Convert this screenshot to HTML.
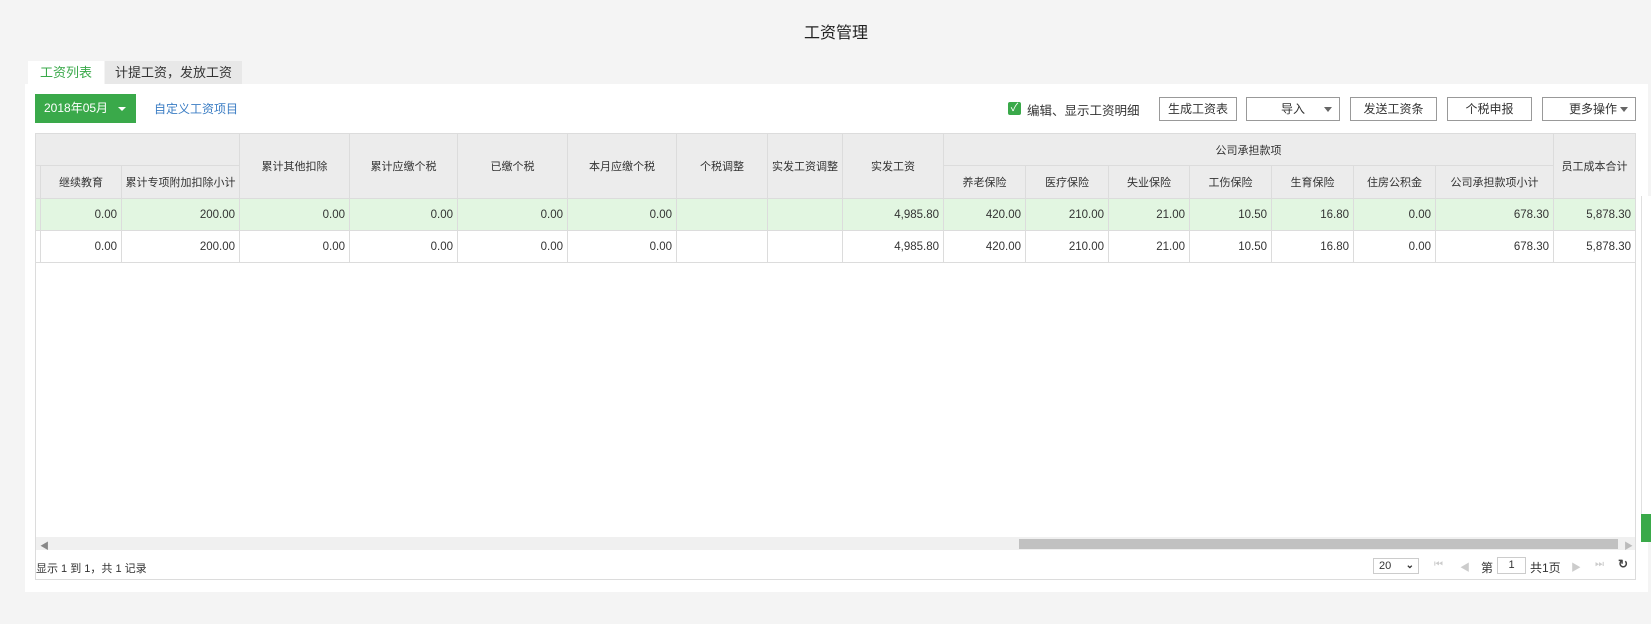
<!DOCTYPE html>
<html><head><meta charset="utf-8"><style>
*{box-sizing:border-box;margin:0;padding:0}
body{width:1651px;height:624px;background:#f4f4f4;font-family:"Liberation Sans","Noto Sans CJK SC",sans-serif;font-size:12px;color:#333;position:relative;overflow:hidden}
.a{position:absolute}
.title{left:0;width:1672px;top:19px;text-align:center;font-size:16px;color:#222}
.tab1{left:28px;top:61px;width:76px;height:23px;background:#fff;color:#3aa94a;font-size:13px;text-align:center;line-height:23px}
.tab2{left:105px;top:61px;width:137px;height:23px;background:#e8e8e8;color:#333;font-size:13px;text-align:center;line-height:23px}
.panel{left:25px;top:84px;width:1623px;height:508px;background:#fff}
.month{left:35px;top:94px;width:101px;height:29px;background:#3aa94a;color:#fff;font-size:12px;line-height:29px;padding-left:9px}
.month:after{content:"";position:absolute;right:10px;top:13px;border:4px solid transparent;border-top:4px solid #fff}
.link{left:154px;top:100px;color:#3b7dc4;font-size:12px}
.btn{top:97px;height:24px;border:1px solid #999;background:#fff;font-size:12px;text-align:center;line-height:22px;color:#333}
.dd:after{content:"";position:absolute;right:7px;top:9px;border:4px solid transparent;border-top:5px solid #666}
table{position:absolute;left:35px;top:133px;border-collapse:collapse;table-layout:fixed}
td,th{border:1px solid #dcdcdc;font-weight:normal;font-size:11px;white-space:nowrap;overflow:hidden}
th{background:#ececec;color:#333;text-align:center}
td{text-align:right;padding-right:4px;height:32px;font-size:11.5px;color:#333}
tr.g td{background:#e2f6e1}
tr.w td{background:#fff}
</style></head><body>
<div class="a title">工资管理</div>
<div class="a tab1">工资列表</div>
<div class="a tab2">计提工资，发放工资</div>
<div class="a panel"></div>
<div class="a month">2018年05月</div>
<div class="a link">自定义工资项目</div>
<div class="a" style="left:1008px;top:102px;width:13px;height:13px;background:#3aa94a;border-radius:2px;color:#fff;font-size:11px;line-height:13px;text-align:center">✓</div>
<div class="a" style="left:1027px;top:100px;font-size:12.5px">编辑、显示工资明细</div>
<div class="a btn" style="left:1159px;width:78px">生成工资表</div>
<div class="a btn dd" style="left:1246px;width:94px">导入</div>
<div class="a btn" style="left:1350px;width:87px">发送工资条</div>
<div class="a btn" style="left:1447px;width:85px">个税申报</div>
<div class="a btn dd" style="left:1542px;width:94px;text-align:left;padding-left:26px">更多操作</div>
<table>
<colgroup><col style="width:5px"><col style="width:81px"><col style="width:118px"><col style="width:110px"><col style="width:108px"><col style="width:110px"><col style="width:109px"><col style="width:91px"><col style="width:75px"><col style="width:101px"><col style="width:82px"><col style="width:83px"><col style="width:81px"><col style="width:82px"><col style="width:82px"><col style="width:82px"><col style="width:118px"><col style="width:82px"></colgroup>
<tr style="height:32px"><th colspan="3" style="border-bottom:1px solid #dcdcdc"></th><th rowspan="2">累计其他扣除</th><th rowspan="2">累计应缴个税</th><th rowspan="2">已缴个税</th><th rowspan="2">本月应缴个税</th><th rowspan="2">个税调整</th><th rowspan="2">实发工资调整</th><th rowspan="2">实发工资</th><th colspan="7">公司承担款项</th><th rowspan="2">员工成本合计</th></tr>
<tr style="height:33px"><th></th><th>继续教育</th><th>累计专项附加扣除小计</th><th>养老保险</th><th>医疗保险</th><th>失业保险</th><th>工伤保险</th><th>生育保险</th><th>住房公积金</th><th>公司承担款项小计</th></tr>
<tr class="g"><td></td><td>0.00</td><td>200.00</td><td>0.00</td><td>0.00</td><td>0.00</td><td>0.00</td><td></td><td></td><td>4,985.80</td><td>420.00</td><td>210.00</td><td>21.00</td><td>10.50</td><td>16.80</td><td>0.00</td><td>678.30</td><td>5,878.30</td></tr>
<tr class="w"><td></td><td>0.00</td><td>200.00</td><td>0.00</td><td>0.00</td><td>0.00</td><td>0.00</td><td></td><td></td><td>4,985.80</td><td>420.00</td><td>210.00</td><td>21.00</td><td>10.50</td><td>16.80</td><td>0.00</td><td>678.30</td><td>5,878.30</td></tr>
</table>
<div class="a" style="left:35px;top:133px;width:1601px;height:447px;border:1px solid #dcdcdc;pointer-events:none"></div>
<div class="a" style="left:36px;top:537px;width:1599px;height:13px;background:#f0f0f0"></div>
<div class="a" style="left:1019px;top:539px;width:599px;height:10px;background:#c1c1c1"></div>
<div class="a" style="left:40px;top:539px;color:#888;font-size:9px">◀</div>
<div class="a" style="left:1624px;top:539px;color:#bbb;font-size:9px">▶</div>
<div class="a" style="left:36px;top:560px;font-size:11px">显示 1 到 1，共 1 记录</div>
<div class="a" style="left:1373px;top:558px;width:46px;height:16px;border:1px solid #ccc;font-size:11px;line-height:14px;padding-left:5px">20 <span style="position:absolute;right:4px;font-size:10px;font-weight:bold">⌄</span></div>
<div class="a" style="left:1434px;top:559px;color:#ccc;font-size:10px">⏮</div>
<div class="a" style="left:1460px;top:559px;color:#ccc;font-size:10px">◀</div>
<div class="a" style="left:1481px;top:559px;font-size:12px">第</div>
<div class="a" style="left:1497px;top:557px;width:29px;height:17px;border:1px solid #ccc;text-align:center;font-size:11px;line-height:15px">1</div>
<div class="a" style="left:1530px;top:559px;font-size:12px">共1页</div>
<div class="a" style="left:1571px;top:559px;color:#ccc;font-size:10px">▶</div>
<div class="a" style="left:1595px;top:559px;color:#ccc;font-size:10px">⏭</div>
<div class="a" style="left:1618px;top:557px;font-size:12px;font-weight:bold;color:#444">↻</div>
<div class="a" style="left:1641px;top:196px;width:10px;height:318px;border-left:1px solid #e0e0e0;background:#fff"></div>
<div class="a" style="left:1641px;top:514px;width:10px;height:28px;background:#3aa94a"></div>
</body></html>
